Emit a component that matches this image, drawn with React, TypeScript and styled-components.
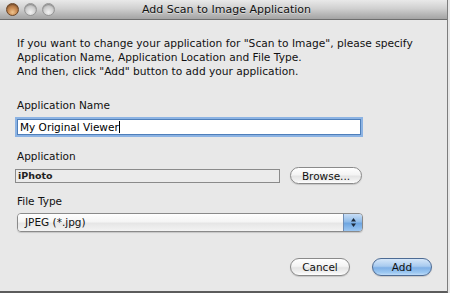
import React from "react";
import styled, { createGlobalStyle } from "styled-components";

const GlobalStyle = createGlobalStyle`
  html, body { margin: 0; padding: 0; background: #e8e8e8; }
  body { font-family: "Lucida Grande", "DejaVu Sans", sans-serif; }
  * { box-sizing: border-box; }
`;

const Window = styled.div`
  width: 448px;
  height: 293px;
  background: #e8e8e8;
  border-right: 1px solid #7d7d7d;
  border-bottom: 2px solid #5c5c5c;
  display: flex;
  flex-direction: column;
  overflow: hidden;
`;

const TitleBar = styled.div`
  height: 20px;
  flex: none;
  display: grid;
  grid-template-columns: 1fr auto 1fr;
  align-items: center;
  background: linear-gradient(#e9e9e9 0%, #d0d0d0 45%, #b3b3b3 80%, #a4a4a4 100%);
  border-bottom: 1px solid #6e6e6e;
  padding-left: 6px;
`;

const Lights = styled.div`
  display: flex;
  gap: 5px;
  align-items: center;
`;

const Light = styled.span<{ $active?: boolean }>`
  width: 13px;
  height: 13px;
  border-radius: 50%;
  border: 1px solid ${(p) => (p.$active ? "#6b4526" : "#959595")};
  background: ${(p) =>
    p.$active
      ? "radial-gradient(circle at 50% 75%, #f0c48e 0%, #c88a52 45%, #8a5630 100%)"
      : "radial-gradient(circle at 50% 75%, #f2f2f2 0%, #cfcfcf 50%, #a9a9a9 100%)"};
  box-shadow: inset 0 1px 1px rgba(0, 0, 0, 0.25);
`;

const Title = styled.div`
  font-size: 11px;
  color: #111;
  line-height: 19px;
  text-shadow: 0 1px 0 rgba(255, 255, 255, 0.45);
  white-space: nowrap;
`;

const Content = styled.div`
  flex: 1;
  padding: 17px 0 0 17px;
  display: flex;
  flex-direction: column;
`;

const Intro = styled.p`
  margin: 0;
  font-size: 10.65px;
  line-height: 14px;
  color: #111;
  white-space: nowrap;
`;

const Label = styled.div<{ $top: number }>`
  margin-top: ${(p) => p.$top}px;
  font-size: 10.5px;
  line-height: 14px;
  color: #111;
`;

const TextField = styled.div`
  margin-top: 7px;
  width: 344px;
  height: 16px;
  background: #fff;
  border: 1px solid #4f7fba;
  box-shadow: 0 0 0 2px #8cb3e3;
  font-size: 10.5px;
  line-height: 14px;
  padding-left: 2px;
  color: #000;
  display: flex;
  align-items: center;
`;

const Caret = styled.span`
  display: inline-block;
  width: 1px;
  height: 12px;
  background: #000;
`;

const Row = styled.div`
  margin-top: 4px;
  margin-left: -2px;
  display: flex;
  align-items: center;
  gap: 10px;
`;

const ReadOnlyField = styled.div`
  width: 265px;
  height: 14px;
  border: 1px solid #8a8a8a;
  background: #ebebeb;
  font-size: 9.5px;
  font-weight: bold;
  line-height: 12px;
  padding-left: 2px;
  color: #222;
`;

const PillButton = styled.button<{ $w: number; $h?: number; $default?: boolean }>`
  width: ${(p) => p.$w}px;
  height: ${(p) => p.$h ?? 18}px;
  border-radius: 9px;
  padding: 0;
  font-family: inherit;
  font-size: 10.5px;
  line-height: 14px;
  color: #111;
  border: 1px solid ${(p) => (p.$default ? "#4d6b94" : "#8a8a8a")};
  background: ${(p) =>
    p.$default
      ? "linear-gradient(#d6e7f9 0%, #a9cbef 45%, #7fb0e6 55%, #9cc8f2 85%, #c0dcf7 100%)"
      : "linear-gradient(#ffffff 0%, #f4f4f4 45%, #e4e4e4 55%, #f2f2f2 85%, #ffffff 100%)"};
  box-shadow: 0 1px 1px rgba(0, 0, 0, 0.15);
`;

const Select = styled.div`
  margin-top: 5px;
  width: 346px;
  height: 19px;
  border: 1px solid #8a8a8a;
  border-radius: 4px;
  display: flex;
  overflow: hidden;
  box-shadow: 0 1px 1px rgba(0, 0, 0, 0.15);
`;

const SelectValue = styled.div`
  flex: 1;
  font-size: 10.5px;
  line-height: 17px;
  padding-left: 7px;
  color: #111;
  background: linear-gradient(#ffffff 0%, #f5f5f5 45%, #e6e6e6 55%, #f3f3f3 100%);
`;

const SelectArrows = styled.div`
  width: 19px;
  border-left: 1px solid #6f8db5;
  background: linear-gradient(#c8def6 0%, #8fbbe9 45%, #6ea5e0 55%, #9cc7f2 100%);
  display: flex;
  align-items: center;
  justify-content: center;
`;

const Footer = styled.div`
  margin-top: 26px;
  margin-left: 273px;
  display: flex;
  gap: 22px;
`;

export default function App() {
  return (
    <>
      <GlobalStyle />
      <Window>
        <TitleBar>
          <Lights>
            <Light $active />
            <Light />
            <Light />
          </Lights>
          <Title>Add Scan to Image Application</Title>
          <div />
        </TitleBar>
        <Content>
          <Intro>
            If you want to change your application for "Scan to Image", please specify
            <br />
            Application Name, Application Location and File Type.
            <br />
            And then, click "Add" button to add your application.
          </Intro>
          <Label $top={19}>Application Name</Label>
          <TextField>
            My Original Viewer
            <Caret />
          </TextField>
          <Label $top={14}>Application</Label>
          <Row>
            <ReadOnlyField>iPhoto</ReadOnlyField>
            <PillButton $w={72} $h={17}>
              Browse...
            </PillButton>
          </Row>
          <Label $top={10}>File Type</Label>
          <Select>
            <SelectValue>JPEG (*.jpg)</SelectValue>
            <SelectArrows>
              <svg width="7" height="11" viewBox="0 0 7 11">
                <path d="M3.5 1 L6 4.5 L1 4.5 Z" fill="#1e2a3a" />
                <path d="M3.5 10 L6 6.5 L1 6.5 Z" fill="#1e2a3a" />
              </svg>
            </SelectArrows>
          </Select>
          <Footer>
            <PillButton $w={60}>Cancel</PillButton>
            <PillButton $w={60} $default>
              Add
            </PillButton>
          </Footer>
        </Content>
      </Window>
    </>
  );
}
